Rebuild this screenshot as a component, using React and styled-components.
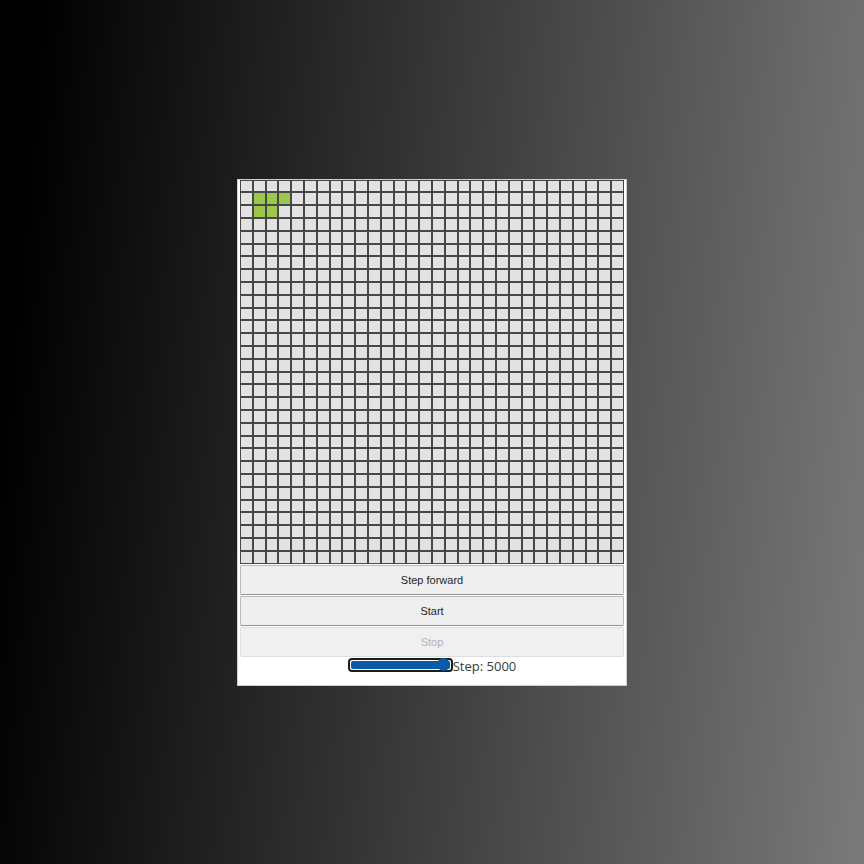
import React from 'react';
import styled, { createGlobalStyle } from 'styled-components';

const GlobalStyle = createGlobalStyle`
  html, body {
    margin: 0;
    padding: 0;
  }
  body {
    font-family: 'Liberation Sans', Arial, sans-serif;
  }
`;

const Page = styled.div`
  display: flex;
  justify-content: center;
  align-items: center;
  height: 100vh;
  background: linear-gradient(95deg, #000 4%, #3a3a3a 50%, #7a7a7a 100%);
`;

const Panel = styled.div`
  display: flex;
  flex-direction: column;
  width: 384px;
  padding: 0 2px;
  background: #fff;
  box-shadow: 0 0 0 1px #cfcfcf;
`;

const Board = styled.div`
  display: grid;
  grid-template-columns: repeat(30, 1fr);
  grid-template-rows: repeat(30, 1fr);
  width: 384px;
  height: 384px;
`;

const Cell = styled.div`
  box-sizing: border-box;
  border: 1px solid #474747;
  background: ${p => (p.$alive ? '#9bc84a' : '#e2e2e2')};
`;

const Controls = styled.div`
  display: flex;
  flex-direction: column;
  gap: 1px;
  padding-top: 1px;
`;

const Button = styled.button`
  height: 30px;
  width: 100%;
  margin: 0;
  border: 1px solid #b8b8b8;
  border-bottom-color: #939393;
  border-radius: 2px;
  background: #efefef;
  color: #1f1f1f;
  font-family: 'Liberation Sans', Arial, sans-serif;
  font-size: 11px;

  &:disabled {
    color: #b0b0b0;
    border-color: #dedede;
    background: #f0f0f0;
  }
`;

const SliderRow = styled.div`
  display: flex;
  justify-content: center;
  align-items: flex-start;
  height: 28px;
  padding-top: 1px;
  box-sizing: border-box;
`;

const Range = styled.input`
  -webkit-appearance: none;
  appearance: none;
  width: 105px;
  height: 14px;
  margin: 0;
  box-sizing: border-box;
  border: 2px solid #1c1c1c;
  border-radius: 4px;
  background: #fff;
  padding: 1px;

  &::-webkit-slider-runnable-track {
    height: 8px;
    border-radius: 2px;
    background: #0b5aa7;
  }

  &::-webkit-slider-thumb {
    -webkit-appearance: none;
    appearance: none;
    width: 13px;
    height: 13px;
    margin-top: -2.5px;
    border-radius: 50%;
    background: #0b5aa7;
  }
`;

const StepLabel = styled.span`
  font-family: 'Open Sans', 'Noto Sans', sans-serif;
  font-size: 13px;
  line-height: 16px;
  color: #3a3a3a;
`;

const alive = new Set(['1,1', '1,2', '1,3', '2,1', '2,2']);

export default function App() {
  const cells = [];
  for (let r = 0; r < 30; r++) {
    for (let c = 0; c < 30; c++) {
      cells.push(<Cell key={`${r}-${c}`} $alive={alive.has(`${r},${c}`)} />);
    }
  }

  return (
    <>
      <GlobalStyle />
      <Page>
        <Panel>
          <Board>{cells}</Board>
          <Controls>
            <Button>Step forward</Button>
            <Button>Start</Button>
            <Button disabled>Stop</Button>
          </Controls>
          <SliderRow>
            <Range type="range" min="100" max="5000" defaultValue="5000" />
            <StepLabel>Step: 5000</StepLabel>
          </SliderRow>
        </Panel>
      </Page>
    </>
  );
}
